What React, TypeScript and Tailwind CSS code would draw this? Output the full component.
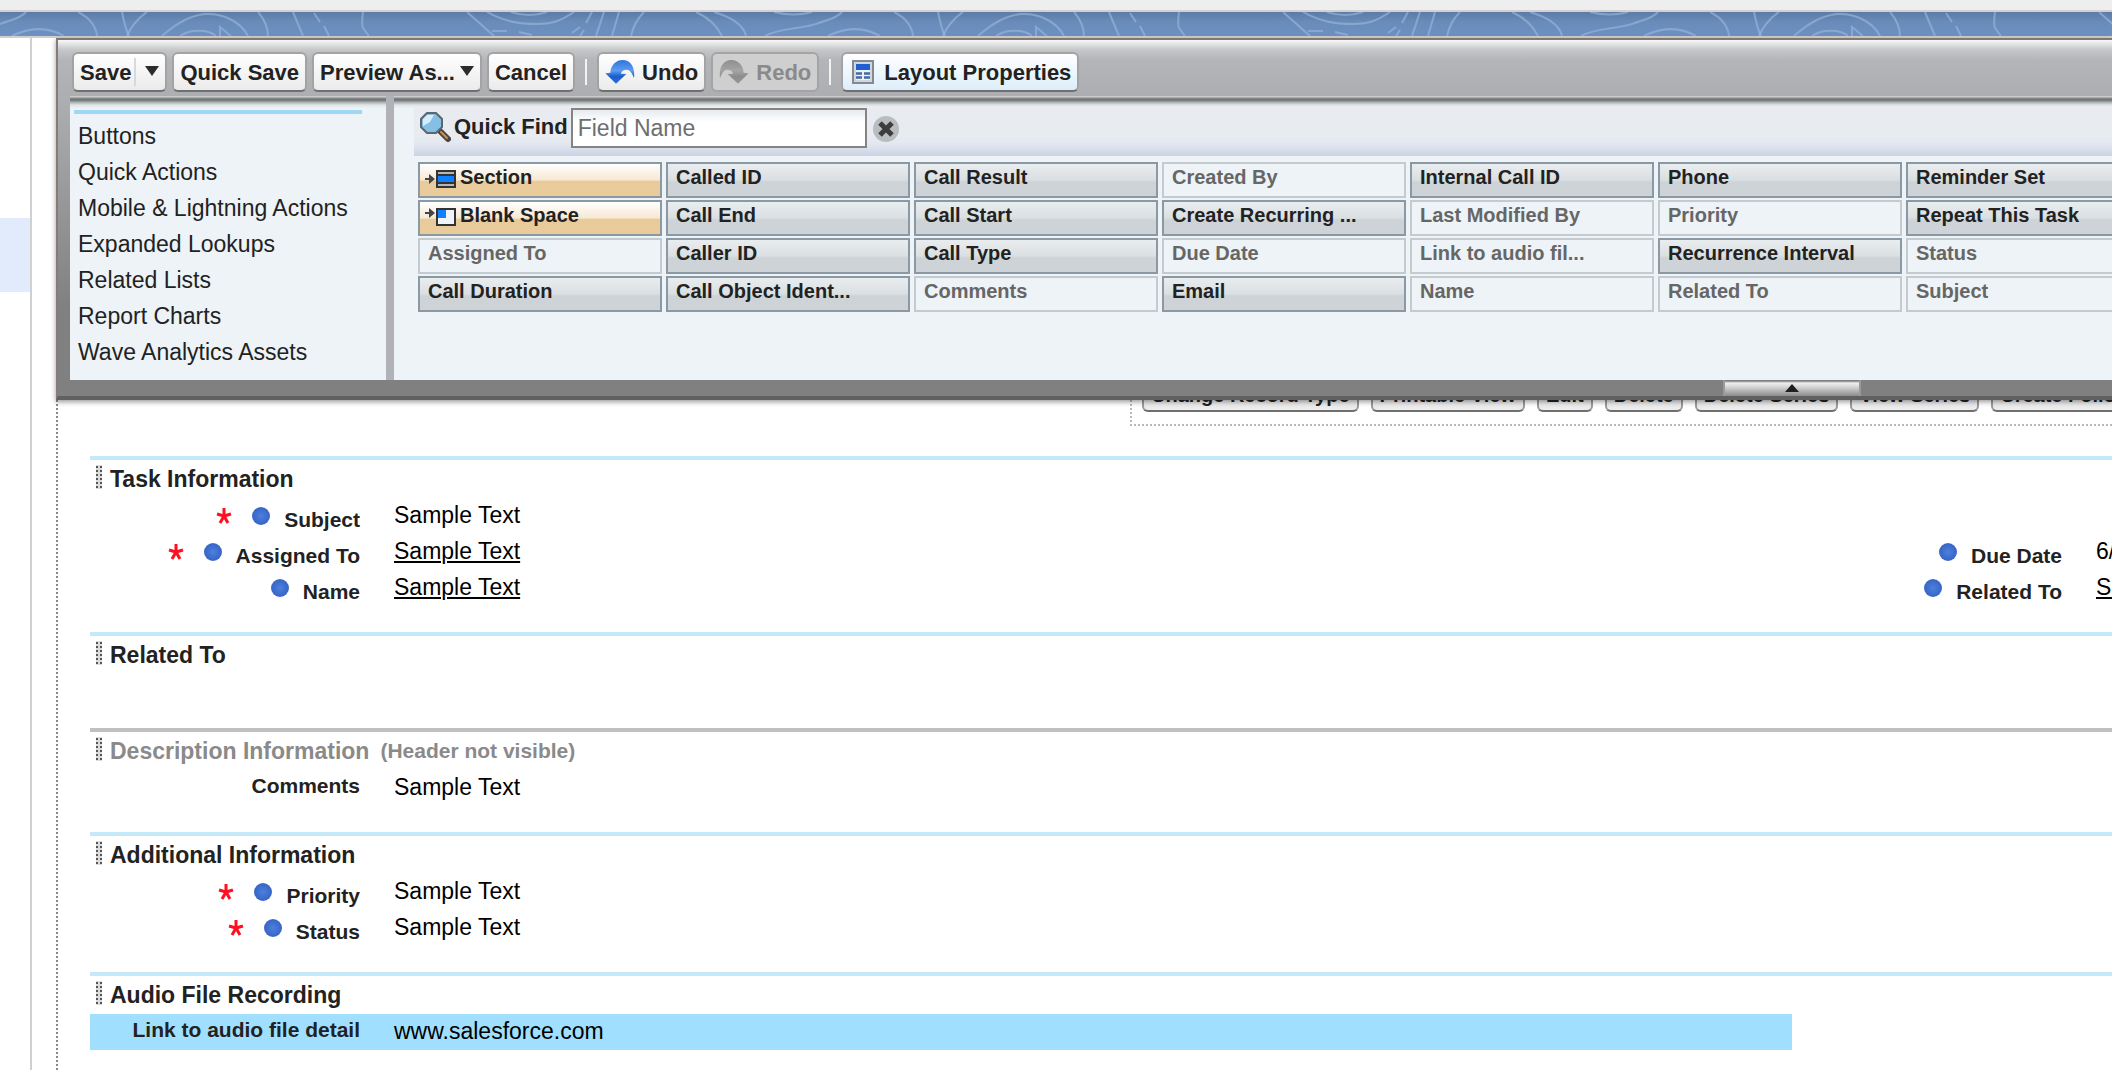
import type { ReactNode } from "react";
import { clsx } from "clsx";

const CATEGORIES = [
  "Buttons",
  "Quick Actions",
  "Mobile & Lightning Actions",
  "Expanded Lookups",
  "Related Lists",
  "Report Charts",
  "Wave Analytics Assets",
];

type PaletteKind = "special" | "available" | "used";

interface PaletteItem {
  icon?: "section" | "blank";
  kind: PaletteKind;
  label: string;
}

/** Palette entries in column order, four to a column. */
const PALETTE: readonly PaletteItem[] = [
  { label: "Section", kind: "special", icon: "section" },
  { label: "Blank Space", kind: "special", icon: "blank" },
  { label: "Assigned To", kind: "used" },
  { label: "Call Duration", kind: "available" },
  { label: "Called ID", kind: "available" },
  { label: "Call End", kind: "available" },
  { label: "Caller ID", kind: "available" },
  { label: "Call Object Ident...", kind: "available" },
  { label: "Call Result", kind: "available" },
  { label: "Call Start", kind: "available" },
  { label: "Call Type", kind: "available" },
  { label: "Comments", kind: "used" },
  { label: "Created By", kind: "used" },
  { label: "Create Recurring ...", kind: "available" },
  { label: "Due Date", kind: "used" },
  { label: "Email", kind: "available" },
  { label: "Internal Call ID", kind: "available" },
  { label: "Last Modified By", kind: "used" },
  { label: "Link to audio fil...", kind: "used" },
  { label: "Name", kind: "used" },
  { label: "Phone", kind: "available" },
  { label: "Priority", kind: "used" },
  { label: "Recurrence Interval", kind: "available" },
  { label: "Related To", kind: "used" },
  { label: "Reminder Set", kind: "available" },
  { label: "Repeat This Task", kind: "available" },
  { label: "Status", kind: "used" },
  { label: "Subject", kind: "used" },
];

const DETAIL_BUTTONS = [
  "Change Record Type",
  "Printable View",
  "Edit",
  "Delete",
  "Delete Series",
  "View Series",
  "Create Follow-Up Task",
];

interface Field {
  alwaysShown?: boolean;
  highlighted?: boolean;
  label: string;
  link?: boolean;
  required?: boolean;
  value: string;
}

interface Section {
  hiddenHeader?: boolean;
  left: readonly Field[];
  right?: readonly (Field | null)[];
  title: string;
}

const SECTIONS: readonly Section[] = [
  {
    title: "Task Information",
    left: [
      { label: "Subject", value: "Sample Text", required: true, alwaysShown: true },
      { label: "Assigned To", value: "Sample Text", required: true, alwaysShown: true, link: true },
      { label: "Name", value: "Sample Text", alwaysShown: true, link: true },
    ],
    right: [
      null,
      { label: "Due Date", value: "6/12/2019", alwaysShown: true },
      { label: "Related To", value: "Sample Text", alwaysShown: true, link: true },
    ],
  },
  { title: "Related To", left: [] },
  {
    title: "Description Information",
    hiddenHeader: true,
    left: [{ label: "Comments", value: "Sample Text" }],
  },
  {
    title: "Additional Information",
    left: [
      { label: "Priority", value: "Sample Text", required: true, alwaysShown: true },
      { label: "Status", value: "Sample Text", required: true, alwaysShown: true },
    ],
  },
  {
    title: "Audio File Recording",
    left: [{ label: "Link to audio file detail", value: "www.salesforce.com", highlighted: true }],
  },
];

/** Blue strip with a repeating contour-line pattern. */
const ContourBand = () => (
  <svg aria-hidden="true" className="block h-6 w-full">
    <defs>
      <linearGradient id="band-fill" x1="0" x2="0" y1="0" y2="1">
        <stop offset="0" stopColor="#5c7ba6" />
        <stop offset="0.4" stopColor="#698bb9" />
        <stop offset="1" stopColor="#6c91c2" />
      </linearGradient>
      <pattern height="24" id="contours" patternUnits="userSpaceOnUse" width="816">
        <g fill="none" stroke="#9db9de" strokeOpacity="0.6" strokeWidth="2">
          <path d="M0 12C10 8 20 7 26 0M12 24C30 15 48 15 64 24M78 0C90 6 96 14 97 24M122 0C124 10 126 18 129 24" />
          <path d="M127 24C130 16 138 6 147 0M162 24C180 8 195 2 208 2S240 8 248 24M180 24C190 17 208 17 216 24M220 24V15L231 24" />
          <path d="M258 0C265 8 268 16 268 24M293 0L303 24M314 1L320 10M324 14L329 24M363 0C362 8 362 14 363 16L369 24" />
          <path d="M467 0L494 24M487 0C505 10 520 12 537 12S562 8 574 0M511 0Q529 6 547 0M492 19H507M519 20L532 23" />
          <path d="M572 21L580 15M584 18L580 24M592 0L586 11M604 0L596 24M619 0L612 24M644 0Q634 10 631 24" />
          <path d="M696 0Q714 8 722 24M714 0C734 6 744 14 746 24M765 24C782 15 798 18 816 12M774 0Q794 5 812 0" />
        </g>
      </pattern>
    </defs>
    <rect fill="url(#band-fill)" height="24" width="100%" />
    <rect fill="url(#contours)" height="24" width="100%" />
  </svg>
);

const CurvedArrow = ({ muted = false }: { muted?: boolean }) => (
  <svg
    aria-hidden="true"
    className={clsx("h-6 w-[30px]", muted && "-scale-x-100")}
    viewBox="0 0 88 72"
  >
    <defs>
      <linearGradient id={muted ? "arrow-muted" : "arrow-blue"} x1="0" x2="0" y1="0" y2="1">
        <stop offset="0" stopColor={muted ? "#8f8f8f" : "#2e74dd"} />
        <stop offset="0.45" stopColor={muted ? "#a5a5a5" : "#5d9cf0"} />
        <stop offset="0.7" stopColor={muted ? "#8d8d8d" : "#1c5ccb"} />
        <stop offset="1" stopColor={muted ? "#969696" : "#2b6fe0"} />
      </linearGradient>
    </defs>
    <path
      d="M0 40L15 38C17 14 33 0 52 0C76 0 90 22 86 54C80 38 73 28 62 29C53 30 48 34 47 41L63 42L32 71Z"
      fill={`url(#${muted ? "arrow-muted" : "arrow-blue"})`}
    />
  </svg>
);

const LayoutIcon = () => (
  <svg aria-hidden="true" className="h-6 w-[22px]" viewBox="0 0 22 24">
    <rect fill="#e8f0f8" height="22" stroke="#85888c" strokeWidth="2" width="20" x="1" y="1" />
    <rect fill="none" height="18" stroke="#b9bec4" width="16" x="3" y="3" />
    <rect fill="#1f5fd0" height="6" width="14" x="4" y="4" />
    <path d="M4 13.500H10M12 13.500H18M4 17.500H10M12 17.500H18" stroke="#46679c" strokeWidth="2.500" />
  </svg>
);

const Magnifier = () => (
  <svg aria-hidden="true" className="h-8 w-8" viewBox="0 0 32 32">
    <path d="M20 19L29 28" stroke="#4b4440" strokeLinecap="round" strokeWidth="6" />
    <path d="M22 21L28 27" stroke="#c8935c" strokeLinecap="round" strokeWidth="2" />
    <path
      d="M8 2H17L23 8V16L17 22H8L2 16V8Z"
      fill="#86bfe4"
      stroke="#5c6670"
      strokeLinejoin="round"
      strokeWidth="2"
    />
    <path d="M8 4H15L11 11L4 15V8Z" fill="#d6ecf9" />
  </svg>
);

const PaletteIcon = ({ name }: { name: "section" | "blank" }) => (
  <svg aria-hidden="true" className="h-[18px] w-8" viewBox="0 0 32 18">
    {name === "section" ? (
      <>
        <path d="M1 8H5V4L11 9L5 14V10H1Z" fill="#444" />
        <rect fill="#b5b5b5" height="16" stroke="#333" strokeWidth="2" width="18" x="13" y="1" />
        <rect fill="#0f80ff" height="8" stroke="#333" strokeWidth="2" width="18" x="13" y="5" />
      </>
    ) : (
      <>
        <path d="M1 4H5V0L11 5L5 10V6H1Z" fill="#444" />
        <rect fill="#f0f4f8" height="16" stroke="#333" strokeWidth="2" width="18" x="13" y="1" />
        <rect fill="#0f80ff" height="8" width="8" x="14" y="2" />
      </>
    )}
  </svg>
);

const Caret = () => (
  <svg aria-hidden="true" className="mb-[3px] h-[10px] w-[14px]" viewBox="0 0 14 10">
    <path d="M0 0H14L7 10Z" fill="#2c2c2c" />
  </svg>
);

/** Two dotted columns that mark a section as draggable. */
const Grip = () => (
  <svg aria-hidden="true" className="mb-1 h-6 w-[6px]" viewBox="0 0 6 24">
    <rect fill="#dcdcdc" height="24" width="6" />
    <path d="M1 1V24M5 1V24" stroke="#555" strokeDasharray="2 2" strokeWidth="2" />
  </svg>
);

interface ToolButtonProps {
  children: ReactNode;
  disabled?: boolean;
  tinted?: boolean;
}

const ToolButton = ({ children, disabled = false, tinted = false }: ToolButtonProps) => (
  <button
    className={clsx(
      "flex h-10 shrink-0 items-center rounded-md border-2 px-[6px] text-[22px] font-bold whitespace-nowrap",
      disabled
        ? "border-[#a3a4a6] bg-[#cfcfd0] text-[#8a8a8a]"
        : "border-[#a3a3a3] border-b-[#6f6f6f] text-[#222]",
      !disabled && (tinted ? "bg-linear-to-b from-white to-[#dceefb]" : "bg-linear-to-b from-white to-[#ebebeb]")
    )}
    disabled={disabled}
    type="button"
  >
    {children}
  </button>
);

const ToolSeparator = () => (
  <span aria-hidden="true" className="mx-[5px] h-[26px] w-[2px] bg-[#f2f2f2]" />
);

const Toolbar = () => (
  <div className="flex h-14 items-center gap-[5px] bg-[linear-gradient(#f8f8f8,#c4c6c8_10px,#b4b5b9_20px,#adaeb1)] pt-[8px] pl-[14px]">
    <ToolButton>
      Save
      <span aria-hidden="true" className="mr-[9px] ml-[3px] h-7 w-[2px] bg-[#d5dadd]" />
      <Caret />
    </ToolButton>
    <ToolButton>Quick Save</ToolButton>
    <ToolButton>
      <span className="mr-[5px]">Preview As...</span>
      <Caret />
    </ToolButton>
    <ToolButton>Cancel</ToolButton>
    <ToolSeparator />
    <ToolButton>
      <span className="mr-[7px]">
        <CurvedArrow />
      </span>
      Undo
    </ToolButton>
    <ToolButton disabled>
      <span className="mr-[7px]">
        <CurvedArrow muted />
      </span>
      Redo
    </ToolButton>
    <ToolSeparator />
    <ToolButton tinted>
      <span className="mr-[10px] ml-[3px]">
        <LayoutIcon />
      </span>
      Layout Properties
    </ToolButton>
  </div>
);

/** Dark groove that separates the toolbar from the panes below it. */
const Groove = () => (
  <div
    aria-hidden="true"
    className="h-3 bg-[linear-gradient(#cbcbcb_0px,#cbcbcb_1px,#8a8c8c_2px,#6d7070_4px,#a5aaaa_6px,#dfe4e5_9px,#edf3f6_12px)]"
  />
);

const CategoryList = () => (
  <nav aria-label="Palette categories" className="w-[316px] shrink-0 bg-[#edf3f6] pb-[10px]">
    <Groove />
    <div className="mt-[2px] mr-6 ml-1 h-1 bg-[#a1d7f6]" />
    <ul className="pt-1">
      {CATEGORIES.map((category) => (
        <li key={category}>
          <button className="block h-9 w-full pl-2 text-left text-[23px] leading-[36px] text-[#222]" type="button">
            {category}
          </button>
        </li>
      ))}
    </ul>
  </nav>
);

const QuickFind = () => (
  <div className="ml-5 flex h-12 items-start bg-[linear-gradient(#e8ebf0_60%,#e3e8f0_75%,#cbd3e3)] pl-[5px]">
    <span className="pt-[3px]">
      <Magnifier />
    </span>
    <label className="ml-[3px] text-[22px] leading-[38px] font-bold text-[#222]" htmlFor="quick-find">
      Quick Find
    </label>
    <input
      className="ml-[3px] h-10 w-[296px] border-2 border-[#848484] bg-[linear-gradient(#e6ebee,#fff_12px)] px-[5px] text-[23px] text-[#222] placeholder:text-[#6e6e6e]"
      id="quick-find"
      placeholder="Field Name"
      type="text"
    />
    <button aria-label="Clear quick find" className="mt-2 ml-[6px]" type="button">
      <svg aria-hidden="true" className="size-[26px]" viewBox="0 0 26 26">
        <circle cx="13" cy="13" fill="#b9bdc0" r="13" />
        <path d="M7 7L19 19M19 7L7 19" stroke="#3d3d3d" strokeWidth="5" />
      </svg>
    </button>
  </div>
);

const PALETTE_STYLE: Record<PaletteKind, string> = {
  special:
    "border-[#8a99a3] bg-[linear-gradient(#ffffff,#f7e8d3_50%,#e9ca9b_54%,#e9cb9c)] text-[#222]",
  available:
    "border-[#8a99a3] bg-[linear-gradient(#e9edf0,#dadfe2_50%,#ced3d7_56%,#ced3d7)] text-[#222]",
  used: "border-[#c3cbcf] bg-[#edf3f6] text-[#666]",
};

const FieldPalette = () => (
  <ul className="mt-[6px] ml-6 grid grid-flow-col auto-cols-[244px] grid-rows-4 gap-x-1 gap-y-[2px]">
    {PALETTE.map((item) => (
      <li
        className={clsx(
          "flex h-9 items-start border-2 text-[20px] leading-[26px] font-bold whitespace-nowrap",
          item.icon ? "pl-1" : "pl-2",
          PALETTE_STYLE[item.kind]
        )}
        key={item.label}
      >
        {item.icon ? (
          <span className="mr-1 pt-[6px]">
            <PaletteIcon name={item.icon} />
          </span>
        ) : null}
        {item.label}
      </li>
    ))}
  </ul>
);

const EditorPanel = () => (
  <div className="relative z-10 border-t-2 border-b-4 border-l-2 border-t-[#807875] border-b-[#606060] border-l-[#857c7a] bg-[#808080] shadow-[0_2px_5px_rgba(0,0,0,0.4)]">
    <Toolbar />
    <div className="flex bg-[linear-gradient(#aeafb2,#808080_75%)] pl-3">
      <CategoryList />
      <div className="w-2 shrink-0 bg-[#b1b2b7]" />
      <div className="min-w-0 flex-1 overflow-hidden bg-[#edf3f6]">
        <Groove />
        <QuickFind />
        <FieldPalette />
      </div>
    </div>
    <div className="flex h-4 justify-end pr-[251px]">
      <button
        aria-label="Collapse palette"
        className="flex w-[138px] items-center justify-center border-x-2 border-[#9a9a9a] bg-[linear-gradient(#808080_1px,#efefef_3px,#dcdcdc_6px,#8c8c8c)]"
        type="button"
      >
        <svg aria-hidden="true" className="h-2 w-[14px]" viewBox="0 0 14 8">
          <path d="M7 0L14 8H0Z" fill="#1f1f1f" />
        </svg>
      </button>
    </div>
  </div>
);

const RequiredStar = () => (
  <svg aria-label="Required" className="mr-5 h-4 w-4" role="img" viewBox="0 0 16 16">
    <path
      d="M8 8V0M8 8L1 6M8 8L15 6M8 8L4 15M8 8L12 15"
      stroke="#ff1020"
      strokeWidth="3"
    />
  </svg>
);

const AlwaysShownDot = () => (
  <span
    aria-label="Always on layout"
    className="mr-[14px] size-[18px] rounded-full bg-[radial-gradient(#4c80e0,#3a68c8_60%,#4670c4)]"
    role="img"
  />
);

const FieldRow = ({ field }: { field: Field | null }) =>
  field === null ? (
    <div className="h-9" />
  ) : (
    <div className={clsx("flex h-9 items-center whitespace-nowrap", field.highlighted && "bg-[#a1dfff]")}>
      <dt className="flex w-[270px] shrink-0 items-center justify-end text-[21px] leading-6 font-bold text-[#222]">
        {field.required ? <RequiredStar /> : null}
        {field.alwaysShown ? <AlwaysShownDot /> : null}
        <span className={clsx(field.alwaysShown ? "pt-2" : "pb-1")}>{field.label}</span>
      </dt>
      <dd className="ml-[34px] pb-[2px] text-[23px] leading-[34px] text-black">
        {field.link ? (
          <a className="underline decoration-2 underline-offset-2" href="#">
            {field.value}
          </a>
        ) : (
          field.value
        )}
      </dd>
    </div>
  );

const LayoutSection = ({ section }: { section: Section }) => (
  <section
    className={clsx(
      "border-t-4 pb-[26px] last:pb-5",
      section.hiddenHeader ? "border-[#c0c0c0]" : "border-[#c4e9f8]"
    )}
  >
    <header
      className={clsx(
        "flex h-[38px] items-center pl-[6px] font-bold",
        section.hiddenHeader ? "text-[#8a8a8a]" : "text-[#222]"
      )}
    >
      <Grip />
      <h2 className="ml-2 text-[23px]">{section.title}</h2>
      {section.hiddenHeader ? <span className="ml-[11px] text-[21px]">(Header not visible)</span> : null}
    </header>
    <div className="grid min-h-7 grid-cols-[minmax(0,1fr)_320px]">
      <dl>
        {section.left.map((field) => (
          <FieldRow field={field} key={field.label} />
        ))}
      </dl>
      <dl className="overflow-hidden">
        {section.right?.map((field, index) => (
          <FieldRow field={field} key={field?.label ?? index} />
        ))}
      </dl>
    </div>
  </section>
);

/** Standard record buttons, tucked partly under the editor panel. */
const DetailButtons = () => (
  <div className="ml-[1072px] flex h-[26px] items-end gap-3 overflow-hidden border-b-2 border-l-2 border-dotted border-[#b8b8b8] pb-3 pl-[10px]">
    {DETAIL_BUTTONS.map((label) => (
      <button
        className="h-[34px] shrink-0 rounded-md border-2 border-[#9a9a9a] border-b-[#6f6f6f] bg-[#ececec] px-[7px] text-[20px] leading-[30px] font-bold text-[#222]"
        key={label}
        type="button"
      >
        {label}
      </button>
    ))}
  </div>
);

export default function App() {
  return (
    <div className="flex min-h-screen flex-col overflow-hidden bg-white font-['Liberation_Sans',Arial,sans-serif]">
      <div className="h-3 border-b-2 border-[#d0d0d0] bg-[#eee]" />
      <ContourBand />
      <div className="h-[2px] bg-[#d3cfcc]" />
      <div className="flex flex-1">
        <aside className="w-8 shrink-0 border-r-2 border-[#d0d0d0]">
          <div className="mt-[180px] h-[74px] bg-[#e1ebfb]" />
        </aside>
        <main className="ml-6 flex min-w-0 flex-1 flex-col">
          <EditorPanel />
          <div className="flex-1 border-l-2 border-dotted border-[#888]">
            <DetailButtons />
            <div className="mt-[30px] ml-8">
              {SECTIONS.map((section) => (
                <LayoutSection key={section.title} section={section} />
              ))}
            </div>
          </div>
        </main>
      </div>
    </div>
  );
}
